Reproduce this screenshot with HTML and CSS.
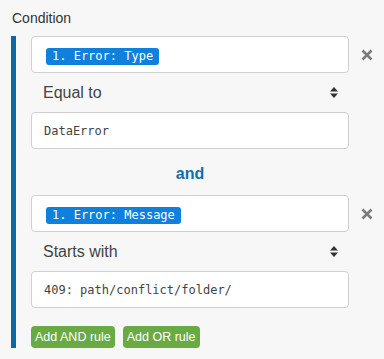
FILE: index.html
```html
<!DOCTYPE html>
<html lang="en">
<head>
    <meta charset="UTF-8">
    <meta name="viewport" content="width=device-width, initial-scale=1.0">
    <title>Condition</title>
    <link rel="stylesheet" href="styles.css">
</head>
<body>
    <div class="page">
        <div class="label">Condition</div>

        <div class="rules">
            <!-- Rule 1 -->
            <div class="field-row">
                <div class="field-box">
                    <span class="badge">1. Error: Type</span>
                </div>
                <button class="remove">
                    <svg width="12" height="12" viewBox="0 0 12 12"><path d="M1.5 1.5 L10.5 10.5 M10.5 1.5 L1.5 10.5" stroke="#7b7b7b" stroke-width="2.6" stroke-linecap="butt"/></svg>
                </button>
            </div>
            <div class="operator">
                <span>Equal to</span>
                <svg width="8" height="11" viewBox="0 0 8 11"><path d="M4 0 L8 4.5 L0 4.5 Z M0 6.5 L8 6.5 L4 11 Z" fill="#333"/></svg>
            </div>
            <div class="value-box">DataError</div>

            <div class="joiner">and</div>

            <!-- Rule 2 -->
            <div class="field-row">
                <div class="field-box">
                    <span class="badge">1. Error: Message</span>
                </div>
                <button class="remove">
                    <svg width="12" height="12" viewBox="0 0 12 12"><path d="M1.5 1.5 L10.5 10.5 M10.5 1.5 L1.5 10.5" stroke="#7b7b7b" stroke-width="2.6" stroke-linecap="butt"/></svg>
                </button>
            </div>
            <div class="operator">
                <span>Starts with</span>
                <svg width="8" height="11" viewBox="0 0 8 11"><path d="M4 0 L8 4.5 L0 4.5 Z M0 6.5 L8 6.5 L4 11 Z" fill="#333"/></svg>
            </div>
            <div class="value-box">409: path/conflict/folder/</div>

            <div class="actions">
                <button class="add-button">Add AND rule</button>
                <button class="add-button">Add OR rule</button>
            </div>
        </div>
    </div>
</body>
</html>
```

FILE: styles.css
```css
/* Global Styles */
body {
    margin: 0;
    padding: 0;
    background-color: #f7f7f7;
    font-family: 'Liberation Sans', Arial, sans-serif;
    color: #333;
}

.page {
    padding: 9px 0 0 11px;
}

.label {
    font-size: 14px;
    line-height: 18px;
    margin: 0 0 9px 1px;
    color: #333;
}

/* Rule list */
.rules {
    border-left: 5px solid #0b69a3;
    padding-left: 15px;
}

.field-row {
    display: flex;
    align-items: center;
}

.field-box,
.value-box {
    box-sizing: border-box;
    width: 318px;
    height: 37px;
    background: #fff;
    border: 1px solid #cfcfcf;
    border-radius: 4px;
}

.field-box {
    padding: 9px 14px;
}

.badge {
    display: inline-block;
    height: 17px;
    line-height: 17px;
    padding: 0 6px;
    background: #0f80dc;
    color: #fff;
    border-radius: 3px;
    font-family: 'DejaVu Sans Mono', monospace;
    font-size: 12px;
}

.remove {
    width: 35px;
    height: 37px;
    padding: 0;
    border: none;
    background: none;
    display: flex;
    align-items: center;
    justify-content: center;
}

.operator {
    box-sizing: border-box;
    width: 318px;
    height: 39px;
    padding: 0 11px 0 12px;
    display: flex;
    align-items: center;
    justify-content: space-between;
    font-size: 16px;
    color: #444;
}

.value-box {
    padding: 0 12px;
    display: flex;
    align-items: center;
    font-family: 'DejaVu Sans Mono', monospace;
    font-size: 12px;
    color: #444;
}

.joiner {
    width: 318px;
    height: 46px;
    box-sizing: border-box;
    padding-top: 3px;
    display: flex;
    align-items: center;
    justify-content: center;
    font-size: 16px;
    font-weight: bold;
    color: #136ea9;
}

/* Buttons */
.actions {
    display: flex;
    gap: 8px;
    margin-top: 18px;
}

.add-button {
    height: 22px;
    padding: 0 4px;
    border: none;
    border-radius: 4px;
    background: #6aaa45;
    color: #fff;
    font-family: 'Liberation Sans', Arial, sans-serif;
    font-size: 12.5px;
    cursor: pointer;
}
```
